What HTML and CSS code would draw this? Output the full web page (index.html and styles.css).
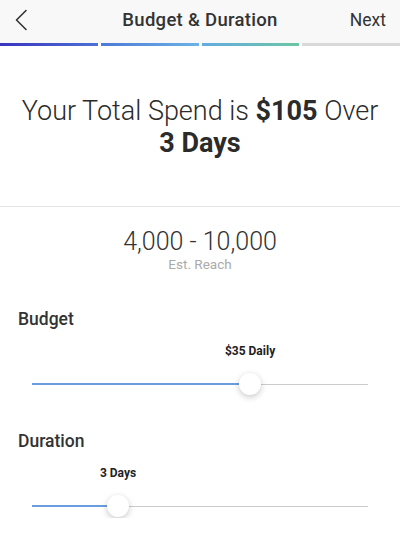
FILE: index.html
```html
<!DOCTYPE html>
<html lang="en">

<head>
    <meta charset="UTF-8">
    <meta name="viewport" content="width=device-width, initial-scale=1.0">
    <title>Budget &amp; Duration</title>
    <link rel="stylesheet" href="styles.css">
</head>

<body>
    <div class="header">
        <a href="javascript:;" class="back">
            <svg width="14" height="22" viewBox="0 0 14 22">
                <path d="M12 1.5 L2.5 11 L12 20.5" fill="none" stroke="#333" stroke-width="1.6" stroke-linecap="round" stroke-linejoin="round"/>
            </svg>
        </a>
        <div class="title">Budget &amp; Duration</div>
        <a href="javascript:;" class="next">Next</a>
    </div>
    <div class="progress">
        <span class="seg s1"></span>
        <span class="seg s2"></span>
        <span class="seg s3"></span>
        <span class="seg s4"></span>
    </div>

    <div class="total">
        Your Total Spend is <b>$105</b> Over<br><b>3 Days</b>
    </div>

    <div class="reach">
        <div class="num">4,000 - 10,000</div>
        <div class="cap">Est. Reach</div>
    </div>

    <div class="group">
        <div class="label">Budget</div>
        <div class="slider">
            <div class="value" style="left: 64.9%">$35 Daily</div>
            <div class="track">
                <div class="fill" style="width: 64.9%"></div>
                <div class="thumb" style="left: 64.9%"></div>
            </div>
        </div>
    </div>

    <div class="group">
        <div class="label">Duration</div>
        <div class="slider">
            <div class="value" style="left: 25.6%">3 Days</div>
            <div class="track">
                <div class="fill" style="width: 25.6%"></div>
                <div class="thumb" style="left: 25.6%"></div>
            </div>
        </div>
    </div>
</body>

</html>
```

FILE: styles.css
```css
* {
    margin: 0;
    padding: 0;
    box-sizing: border-box;
}

body {
    width: 400px;
    font-family: Roboto, "Noto Sans", sans-serif;
    color: #333;
    background: #fff;
}

a {
    text-decoration: none;
    color: #333;
}

.header {
    height: 43px;
    background: #f8f8f8;
    display: flex;
    align-items: center;
    justify-content: space-between;
    padding: 0 14px 4px 14px;
}

.back {
    display: flex;
    width: 40px;
}

.title {
    font-size: 18.5px;
    font-weight: 500;
    letter-spacing: 0.3px;
}

.next {
    width: 40px;
    text-align: right;
    font-size: 17.5px;
}

.progress {
    display: flex;
    gap: 3px;
    height: 3px;
}

.seg {
    flex: 1;
}

.s1 {
    background: linear-gradient(to right, #3a33bf, #4b72d5);
}

.s2 {
    background: linear-gradient(to right, #4c7ad8, #6bb3e7);
}

.s3 {
    background: linear-gradient(to right, #62abe2, #6cc6a4);
}

.s4 {
    background: #d9d9d9;
}

.total {
    padding: 49px 10px 47px 10px;
    border-bottom: 1px solid #e3e3e3;
    text-align: center;
    font-size: 27px;
    line-height: 32px;
    font-weight: 300;
    color: #2b2b2b;
}

.total b {
    font-weight: 700;
}

.reach {
    margin-top: 21px;
    text-align: center;
}

.reach .num {
    font-size: 25px;
    line-height: 28px;
    font-weight: 300;
    color: #333;
}

.reach .cap {
    font-size: 13.5px;
    line-height: 16px;
    color: #aaa;
}

.group {
    margin-top: 36px;
    padding: 0 18px;
}

.group + .group {
    margin-top: 34px;
}

.label {
    font-size: 17.5px;
    line-height: 22px;
    font-weight: 500;
}

.slider {
    position: relative;
    margin: 0 14px;
    padding-top: 42px;
}

.value {
    position: absolute;
    top: 13px;
    transform: translateX(-50%);
    font-size: 12px;
    line-height: 16px;
    font-weight: 700;
    white-space: nowrap;
    color: #222;
}

.track {
    position: relative;
    height: 24px;
    background: linear-gradient(#ccc, #ccc) no-repeat 0 12px / 100% 1px;
}

.fill {
    position: absolute;
    left: 0;
    top: 11px;
    height: 2px;
    background: #6a9de0;
}

.thumb {
    position: absolute;
    top: 1px;
    width: 22px;
    height: 22px;
    margin-left: -11px;
    border-radius: 50%;
    background: #fff;
    box-shadow: 0 2px 6px rgba(0, 0, 0, 0.22);
}
```
